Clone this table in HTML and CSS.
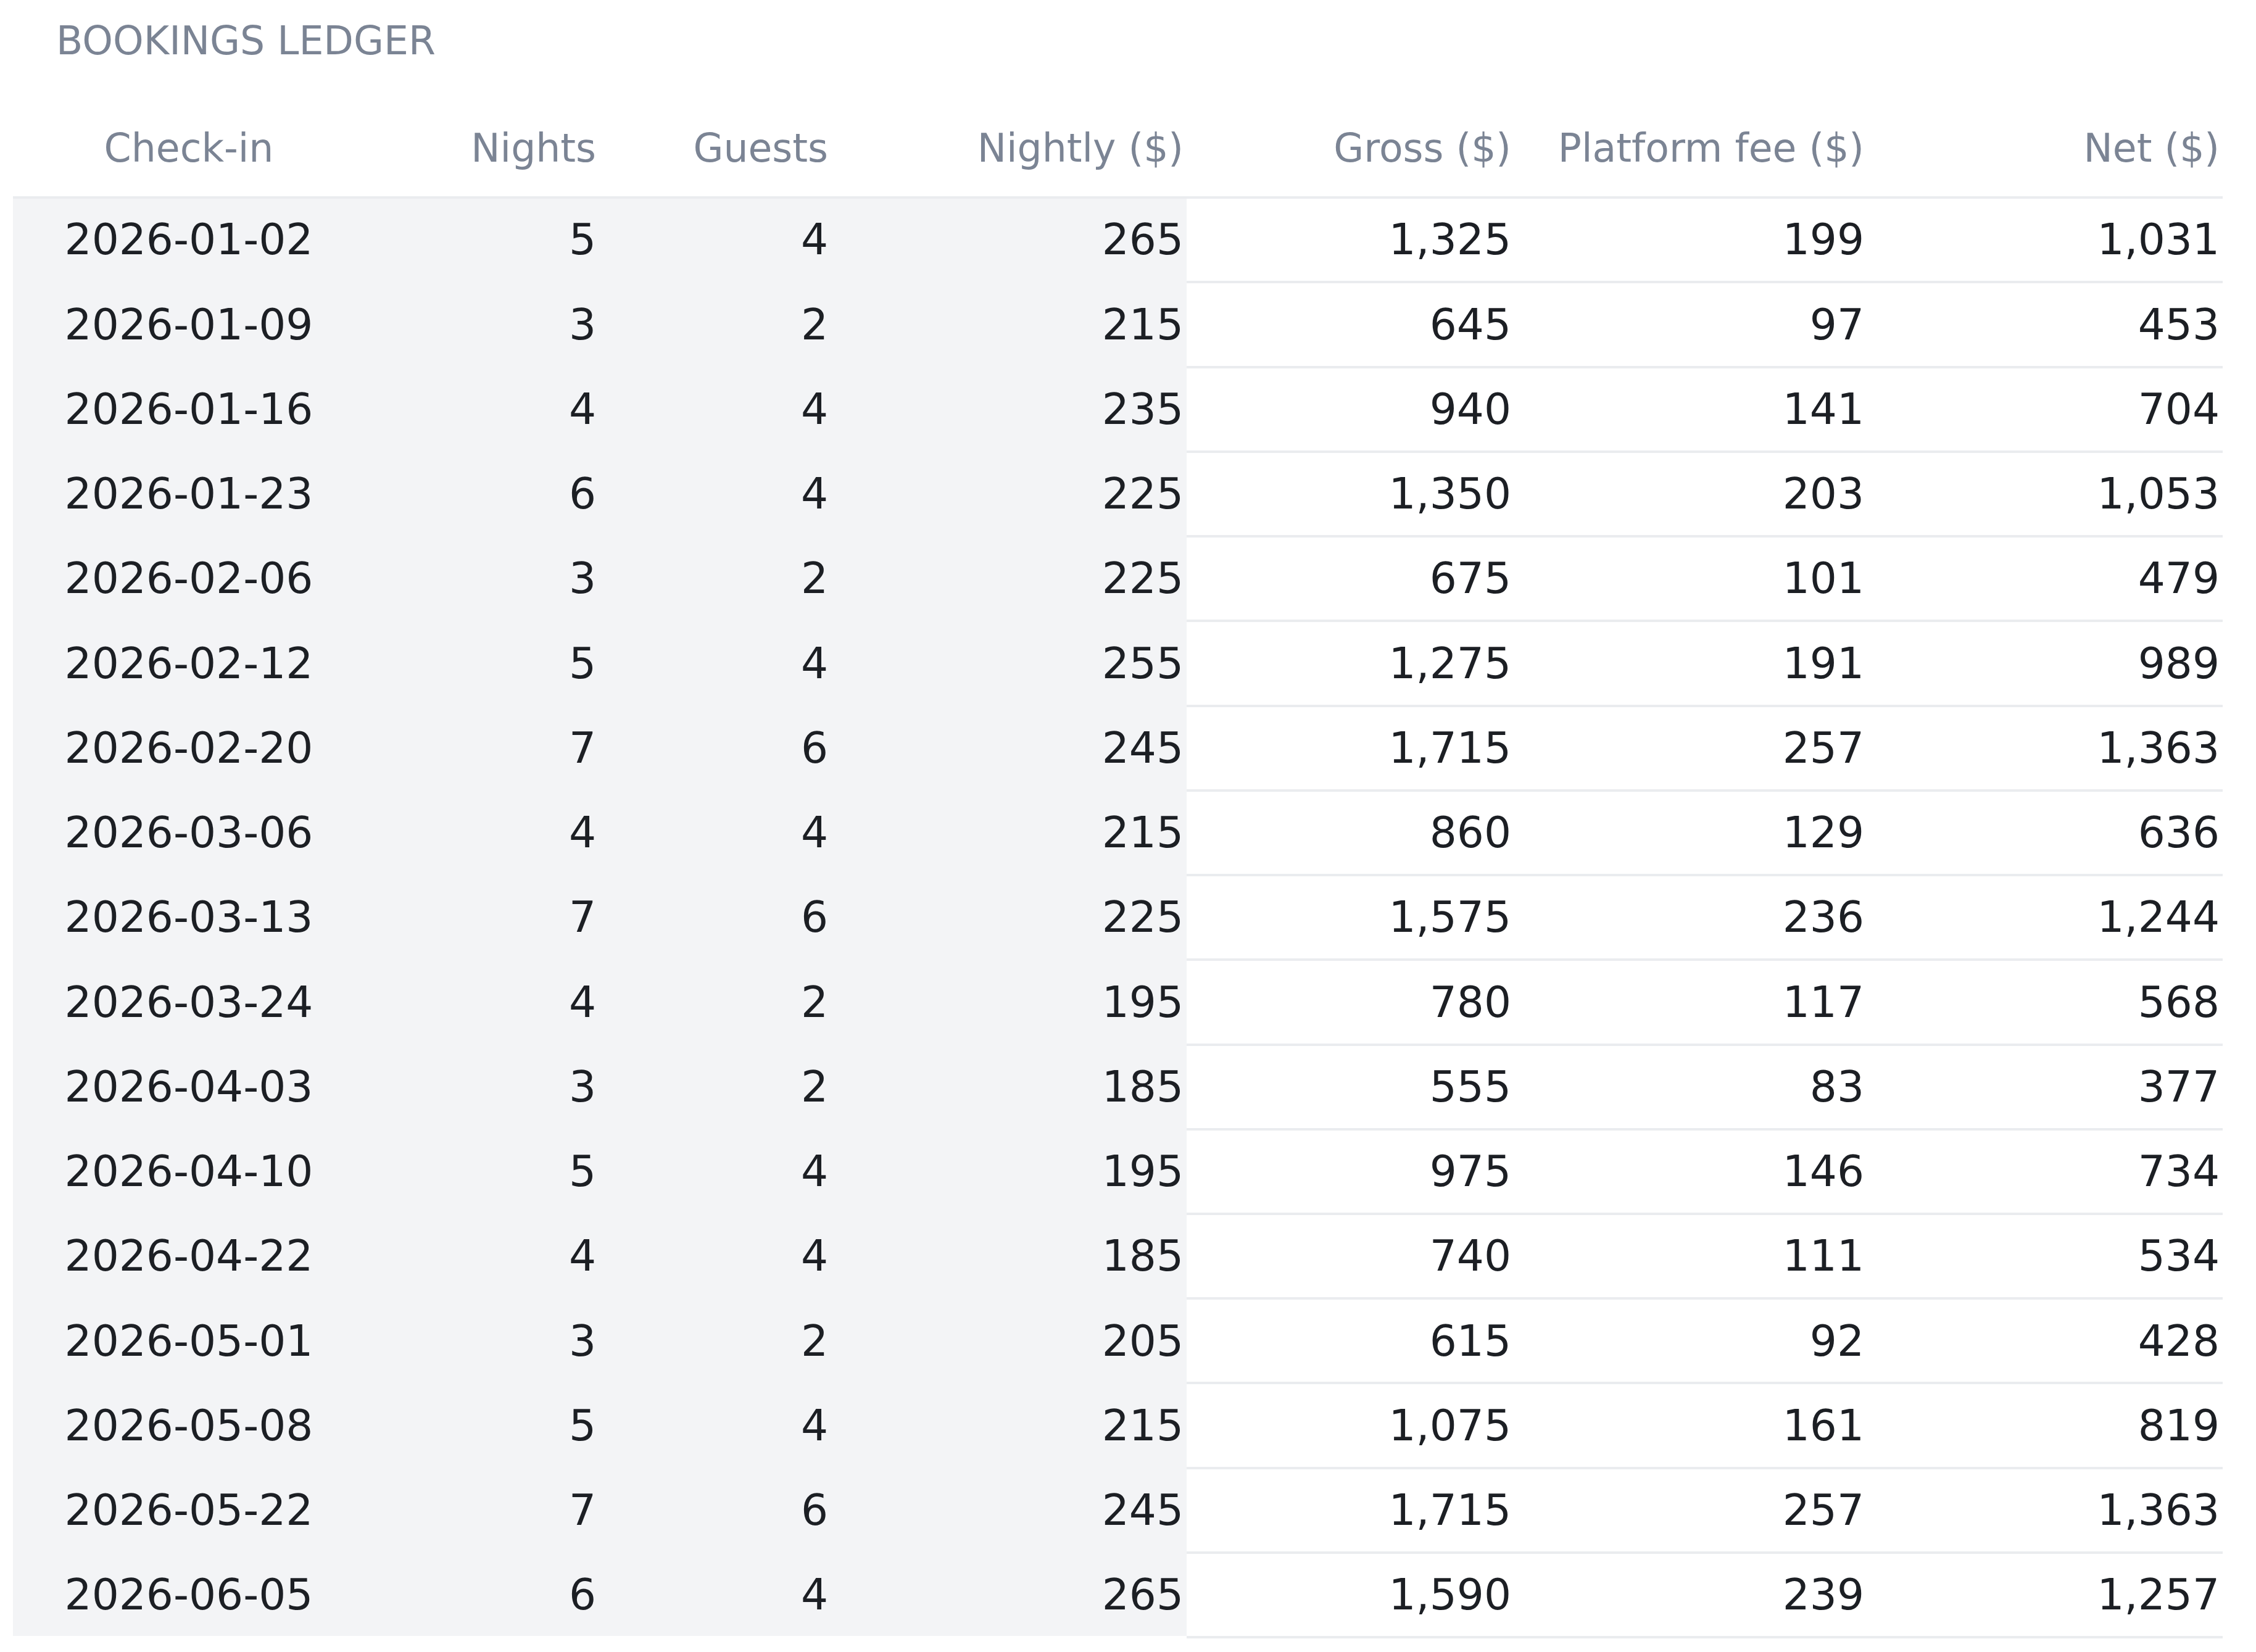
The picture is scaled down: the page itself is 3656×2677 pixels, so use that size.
FILE: index.html
```html
<!DOCTYPE html>
<html lang="en">
<head>
<meta charset="utf-8">
<title>Bookings Ledger</title>
<link rel="stylesheet" href="styles.css">
</head>
<body>
<div class="page">
  <h1 class="title">BOOKINGS LEDGER</h1>
  <table class="ledger">
    <colgroup>
      <col class="c-date"><col class="c-nights"><col class="c-guests"><col class="c-nightly"><col class="c-gross"><col class="c-fee"><col class="c-net">
    </colgroup>
    <thead>
      <tr>
        <th class="center">Check-in</th>
        <th class="num">Nights</th>
        <th class="num">Guests</th>
        <th class="num">Nightly ($)</th>
        <th class="num">Gross ($)</th>
        <th class="num">Platform fee ($)</th>
        <th class="num">Net ($)</th>
      </tr>
    </thead>
    <tbody>
      <tr><td class="center shade">2026-01-02</td><td class="num shade">5</td><td class="num shade">4</td><td class="num shade">265</td><td class="num">1,325</td><td class="num">199</td><td class="num">1,031</td></tr>
      <tr><td class="center shade">2026-01-09</td><td class="num shade">3</td><td class="num shade">2</td><td class="num shade">215</td><td class="num">645</td><td class="num">97</td><td class="num">453</td></tr>
      <tr><td class="center shade">2026-01-16</td><td class="num shade">4</td><td class="num shade">4</td><td class="num shade">235</td><td class="num">940</td><td class="num">141</td><td class="num">704</td></tr>
      <tr><td class="center shade">2026-01-23</td><td class="num shade">6</td><td class="num shade">4</td><td class="num shade">225</td><td class="num">1,350</td><td class="num">203</td><td class="num">1,053</td></tr>
      <tr><td class="center shade">2026-02-06</td><td class="num shade">3</td><td class="num shade">2</td><td class="num shade">225</td><td class="num">675</td><td class="num">101</td><td class="num">479</td></tr>
      <tr><td class="center shade">2026-02-12</td><td class="num shade">5</td><td class="num shade">4</td><td class="num shade">255</td><td class="num">1,275</td><td class="num">191</td><td class="num">989</td></tr>
      <tr><td class="center shade">2026-02-20</td><td class="num shade">7</td><td class="num shade">6</td><td class="num shade">245</td><td class="num">1,715</td><td class="num">257</td><td class="num">1,363</td></tr>
      <tr><td class="center shade">2026-03-06</td><td class="num shade">4</td><td class="num shade">4</td><td class="num shade">215</td><td class="num">860</td><td class="num">129</td><td class="num">636</td></tr>
      <tr><td class="center shade">2026-03-13</td><td class="num shade">7</td><td class="num shade">6</td><td class="num shade">225</td><td class="num">1,575</td><td class="num">236</td><td class="num">1,244</td></tr>
      <tr><td class="center shade">2026-03-24</td><td class="num shade">4</td><td class="num shade">2</td><td class="num shade">195</td><td class="num">780</td><td class="num">117</td><td class="num">568</td></tr>
      <tr><td class="center shade">2026-04-03</td><td class="num shade">3</td><td class="num shade">2</td><td class="num shade">185</td><td class="num">555</td><td class="num">83</td><td class="num">377</td></tr>
      <tr><td class="center shade">2026-04-10</td><td class="num shade">5</td><td class="num shade">4</td><td class="num shade">195</td><td class="num">975</td><td class="num">146</td><td class="num">734</td></tr>
      <tr><td class="center shade">2026-04-22</td><td class="num shade">4</td><td class="num shade">4</td><td class="num shade">185</td><td class="num">740</td><td class="num">111</td><td class="num">534</td></tr>
      <tr><td class="center shade">2026-05-01</td><td class="num shade">3</td><td class="num shade">2</td><td class="num shade">205</td><td class="num">615</td><td class="num">92</td><td class="num">428</td></tr>
      <tr><td class="center shade">2026-05-08</td><td class="num shade">5</td><td class="num shade">4</td><td class="num shade">215</td><td class="num">1,075</td><td class="num">161</td><td class="num">819</td></tr>
      <tr><td class="center shade">2026-05-22</td><td class="num shade">7</td><td class="num shade">6</td><td class="num shade">245</td><td class="num">1,715</td><td class="num">257</td><td class="num">1,363</td></tr>
      <tr><td class="center shade">2026-06-05</td><td class="num shade">6</td><td class="num shade">4</td><td class="num shade">265</td><td class="num">1,590</td><td class="num">239</td><td class="num">1,257</td></tr>
    </tbody>
  </table>
</div>
</body>
</html>
```

FILE: styles.css
```css
html, body {
  margin: 0;
  padding: 0;
  background: #ffffff;
}

body {
  font-family: "DejaVu Sans", "Liberation Sans", sans-serif;
  color: #1c1f24;
}

.page {
  padding: 0 21px 20px 21px;
}

.title {
  margin: 0 0 58.7px 0;
  padding: 28.5px 0 0 70px;
  font-size: 63.2px;
  line-height: 75px;
  font-weight: normal;
  color: #7b8494;
  letter-spacing: 0;
}

.ledger {
  width: 3581px;
  table-layout: fixed;
  border-collapse: separate;
  border-spacing: 0;
}

.c-date { width: 570px; }
.c-nights { width: 380px; }
.c-guests { width: 376px; }
.c-nightly { width: 576px; }
.c-gross { width: 531px; }
.c-fee { width: 572px; }
.c-net { width: 576px; }

.ledger th {
  font-size: 63.2px;
  line-height: 75px;
  font-weight: normal;
  color: #7b8494;
  padding: 41px 5px 40px 5px;
  border-bottom: 4px solid #eaecef;
  white-space: nowrap;
}

.ledger td {
  font-size: 69.33px;
  line-height: 80.7px;
  color: #1c1f24;
  padding: 26.28px 5px 26.28px 5px;
  border-bottom: 4px solid #eaecef;
  white-space: nowrap;
}

.ledger .center { text-align: center; }
.ledger .num { text-align: right; }

.ledger td.shade {
  background: #f3f4f6;
  border-bottom-color: #f3f4f6;
}

.ledger tbody tr:last-child td.shade {
  border-bottom-color: #ffffff;
  background-clip: padding-box;
}
```
